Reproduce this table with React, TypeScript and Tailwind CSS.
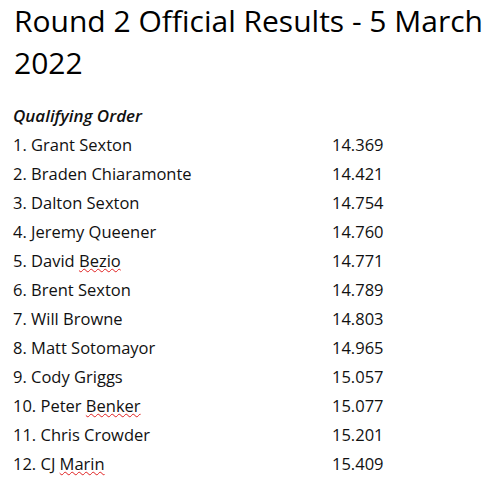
const rows: [string, string][] = [
  ["1. Grant Sexton", "14.369"],
  ["2. Braden Chiaramonte", "14.421"],
  ["3. Dalton Sexton", "14.754"],
  ["4. Jeremy Queener", "14.760"],
  ["5. David |Bezio", "14.771"],
  ["6. Brent Sexton", "14.789"],
  ["7. Will Browne", "14.803"],
  ["8. Matt Sotomayor", "14.965"],
  ["9. Cody Griggs", "15.057"],
  ["10. Peter |Benker", "15.077"],
  ["11. Chris Crowder", "15.201"],
  ["12. CJ |Marin", "15.409"],
];

function Name({ text }: { text: string }) {
  const i = text.indexOf("|");
  if (i < 0) return <>{text}</>;
  return (
    <>
      {text.slice(0, i)}
      <span className="underline decoration-wavy decoration-[#e02020] decoration-1 underline-offset-[1px]">
        {text.slice(i + 1)}
      </span>
    </>
  );
}

export default function App() {
  return (
    <div className="bg-white text-[#111] min-h-[485px] px-[13px]" style={{ fontFamily: "'Open Sans', sans-serif" }}>
      <h1 className="text-[30px] leading-[42px] pl-[1px] text-black">
        Round 2 Official Results - 5 March 2022
      </h1>
      <div className="mt-[17px] text-[17px] leading-[29px] font-semibold italic">Qualifying Order</div>
      <div className="flex flex-col">
        {rows.map(([n, t]) => (
          <div key={n} className="flex text-[16.5px] leading-[29px]">
            <div className="w-[319px]">
              <Name text={n} />
            </div>
            <div>{t}</div>
          </div>
        ))}
      </div>
    </div>
  );
}
